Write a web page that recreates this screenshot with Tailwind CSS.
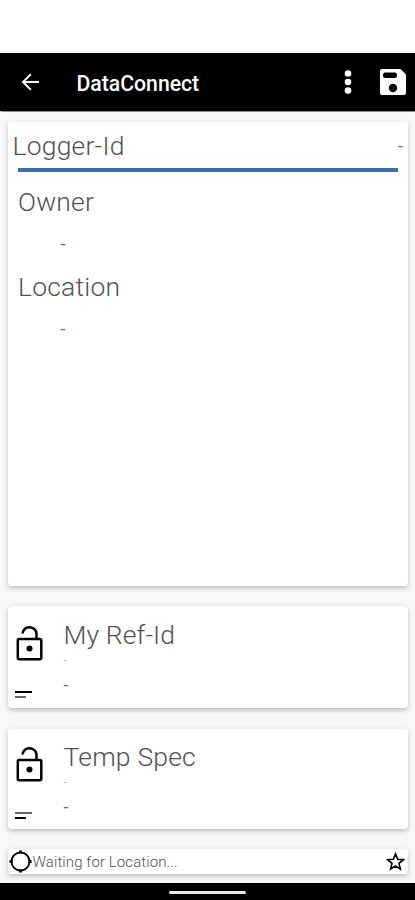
<!DOCTYPE html>
<html lang="en">
<head>
<meta charset="utf-8">
<title>DataConnect</title>
<script src="https://cdn.jsdelivr.net/npm/@tailwindcss/browser@4"></script>
</head>
<body class="w-[415px] h-[900px] overflow-hidden flex flex-col bg-[#f8f8f8] font-[Roboto,sans-serif] text-[#525252]">
  <div class="h-[53px] shrink-0 bg-white"></div>
  <header class="h-[58px] shrink-0 bg-black text-white flex items-center pl-[21px] pr-2 shadow-[0_0_1px_0.5px_#8a8a8a]">
    <svg class="w-[19px] h-[18px] shrink-0" viewBox="0 0 19 18" fill="none" stroke="currentColor" stroke-width="2"><path d="M18 9H2M9.8 1.2 2 9l7.8 7.8"/></svg>
    <h1 class="ml-[36.500px] text-[21.200px] leading-[25px] font-medium whitespace-nowrap pt-[2px]">DataConnect</h1>
    <svg class="ml-auto w-2 h-6 shrink-0" viewBox="0 0 8 24" fill="currentColor"><circle cx="4" cy="3.5" r="3.3"/><circle cx="4" cy="12" r="3.3"/><circle cx="4" cy="20.5" r="3.3"/></svg>
    <svg class="ml-[27px] w-[28px] h-[28px] shrink-0" viewBox="0 0 28 28"><path fill="currentColor" d="M3 1h18.5L27 6.500V25a2 2 0 0 1-2 2H3a2 2 0 0 1-2-2V3a2 2 0 0 1 2-2z"/><rect x="4" y="4.500" width="14" height="5.500" rx="2.200" fill="#000"/><circle cx="14" cy="20" r="4.200" fill="#000"/></svg>
  </header>
  <main class="grow pt-[11px] pl-[7.5px] pr-[7px] flex flex-col">
    <section class="h-[464px] shrink-0 rounded bg-white shadow-[0_2px_5px_0_#00000040] pt-[9px]">
      <div class="flex items-center justify-between pl-[5px] pr-[5px] h-[30px]">
        <span class="text-[26.500px] leading-[30px] font-light tracking-[0.2px]">Logger-Id</span>
        <span class="text-[18px] leading-5 text-[#707070]">-</span>
      </div>
      <div class="ml-[10.500px] mr-[10px] mt-[7px] h-[4px] bg-[#3d6dae]"></div>
      <div class="pl-[10.500px] pt-[15px]">
        <h2 class="text-[26.500px] leading-[30px] font-light tracking-[0.2px]">Owner</h2>
        <p class="pl-[42.500px] mt-[17px] text-[18px] leading-5 text-[#707070]">-</p>
        <h2 class="mt-[18px] text-[26.500px] leading-[30px] font-light tracking-[0.2px]">Location</h2>
        <p class="pl-[42.500px] mt-[17px] text-[18px] leading-5 text-[#707070]">-</p>
      </div>
    </section>
    <section class="mt-5 h-[102px] shrink-0 rounded bg-white shadow-[0_2px_5px_0_#00000040] flex">
      <div class="w-[56px] pl-[7px] pt-5">
        <svg class="w-[29px] h-[35px] ml-[1px]" viewBox="0 0 29 35" fill="none" stroke="#000" stroke-width="2.500"><rect x="1.800" y="13" width="23.500" height="20.200" rx="1.500"/><path d="M6.500 7.500a7 6.500 0 0 1 14 .5v5"/><circle cx="13.500" cy="22.500" r="3" fill="#000" stroke="none"/></svg>
        <svg class="mt-[30px] w-[17px] h-[8px]" viewBox="0 0 17 8"><path fill="#000" d="M0 0h17v2H0z"/><path fill="#666" d="M0 5h11v2H0z"/></svg>
      </div>
      <div class="pt-[14px]">
        <h2 class="text-[26.500px] leading-[30px] font-light tracking-[0.100px]">My Ref-Id</h2>
        <p class="mt-[5px] text-[11px] leading-3 text-[#aaa]">-</p>
        <p class="mt-[8px] text-[18px] leading-5 text-[#707070]">-</p>
      </div>
    </section>
    <section class="mt-[21px] h-[100px] shrink-0 rounded bg-white shadow-[0_2px_5px_0_#00000040] flex">
      <div class="w-[56px] pl-[7px] pt-[18px]">
        <svg class="w-[29px] h-[35px] ml-[1px]" viewBox="0 0 29 35" fill="none" stroke="#000" stroke-width="2.500"><rect x="1.800" y="13" width="23.500" height="20.200" rx="1.500"/><path d="M6.500 7.500a7 6.500 0 0 1 14 .5v5"/><circle cx="13.500" cy="22.500" r="3" fill="#000" stroke="none"/></svg>
        <svg class="mt-[30px] w-[17px] h-[8px]" viewBox="0 0 17 8"><path fill="#666" d="M0 0h17v2H0z"/><path fill="#000" d="M0 5h11v2H0z"/></svg>
      </div>
      <div class="pt-[13px]">
        <h2 class="text-[26.500px] leading-[30px] font-light tracking-[0.2px]">Temp Spec</h2>
        <p class="mt-[5px] text-[11px] leading-3 text-[#aaa]">-</p>
        <p class="mt-[8px] text-[18px] leading-5 text-[#707070]">-</p>
      </div>
    </section>
    <section class="mt-5 h-[25px] shrink-0 rounded bg-white shadow-[0_2px_5px_0_#00000040] flex items-center pl-[1px] pr-[3px]">
      <svg class="w-6 h-6 shrink-0" viewBox="0 0 24 24" fill="none" stroke="#000" stroke-width="1.900"><circle cx="11.500" cy="11.500" r="9"/><path stroke-width="2.800" d="M11.500 .5v3M11.500 19.500v3M.5 11.500h3M19.500 11.500h3"/></svg>
      <span class="text-[15px] leading-5 font-light tracking-[0.100px] whitespace-nowrap">Waiting for Location...</span>
      <svg class="ml-auto w-[19px] h-[19px] shrink-0" viewBox="0 0 20 20" fill="none" stroke="#000" stroke-width="1.700"><path d="m10 2 2.300 5.600 6 .5-4.600 3.900 1.400 5.900L10 14.800l-5.100 3.100L6.300 12 1.700 8.100l6-.5z"/></svg>
    </section>
  </main>
  <footer class="h-[17px] shrink-0 bg-black flex justify-center items-center shadow-[0_0_1px_0.5px_#8a8a8a]">
    <div class="w-[77px] h-[3px] mt-[2px] rounded-full bg-[#e8e8e8]"></div>
  </footer>
</body>
</html>
